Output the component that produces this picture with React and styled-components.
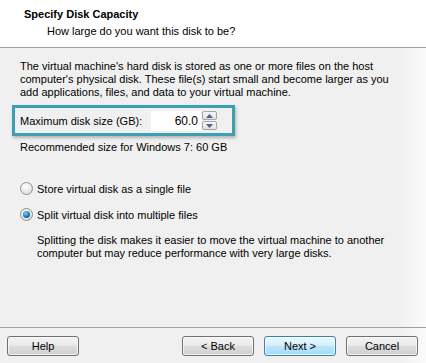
import React, { useState } from "react";
import styled, { createGlobalStyle } from "styled-components";

const GlobalStyle = createGlobalStyle`
  body {
    margin: 0;
    font-family: "Liberation Sans", Arial, sans-serif;
    font-size: 11px;
    color: #000;
  }
`;

export default function App() {
  const [split, setSplit] = useState(true);
  const [size, setSize] = useState("60.0");

  return (
    <>
      <GlobalStyle />
      <Dialog>
        <Header>
          <Title>Specify Disk Capacity</Title>
          <Subtitle>How large do you want this disk to be?</Subtitle>
        </Header>

        <Content>
          <Paragraph>
            The virtual machine's hard disk is stored as one or more files on the host
            computer's physical disk. These file(s) start small and become larger as you
            add applications, files, and data to your virtual machine.
          </Paragraph>

          <Highlight>
            <span>Maximum disk size (GB):</span>
            <Spin>
              <SpinInput value={size} onChange={(e) => setSize(e.target.value)} />
              <SpinButtons>
                <SpinBtn>
                  <svg width="7" height="4" viewBox="0 0 7 4">
                    <path d="M0 4 L3.5 0 L7 4 Z" fill="#4d6185" />
                  </svg>
                </SpinBtn>
                <SpinBtn>
                  <svg width="7" height="4" viewBox="0 0 7 4">
                    <path d="M0 0 L3.5 4 L7 0 Z" fill="#4d6185" />
                  </svg>
                </SpinBtn>
              </SpinButtons>
            </Spin>
          </Highlight>

          <Note>Recommended size for Windows 7: 60 GB</Note>

          <Options>
            <Option onClick={() => setSplit(false)}>
              <Radio checked={!split} />
              Store virtual disk as a single file
            </Option>
            <Option onClick={() => setSplit(true)}>
              <Radio checked={split} />
              Split virtual disk into multiple files
            </Option>
            <OptionNote>
              Splitting the disk makes it easier to move the virtual machine to another
              computer but may reduce performance with very large disks.
            </OptionNote>
          </Options>
        </Content>

        <Footer>
          <Button>Help</Button>
          <Spacer />
          <Button>&lt; Back</Button>
          <Button primary>Next &gt;</Button>
          <Button>Cancel</Button>
        </Footer>
      </Dialog>
    </>
  );
}

const Dialog = styled.div`
  width: 426px;
  height: 363px;
  background: linear-gradient(to right, #f0f0f0 0%, #f0f0f0 93%, #fafafa 100%);
  display: flex;
  flex-direction: column;
  overflow: hidden;
`;

const Header = styled.div`
  height: 48px;
  background: #fff;
  border-bottom: 1px solid #a0a0a0;
  box-sizing: border-box;
  padding: 7px 0 0 24px;
`;

const Title = styled.div`
  font-weight: bold;
  line-height: 14px;
`;

const Subtitle = styled.div`
  padding-left: 23px;
  line-height: 14px;
  margin-top: 3px;
`;

const Content = styled.div`
  flex: 1;
  padding: 12px 20px 0;
`;

const Paragraph = styled.p`
  margin: 0;
  line-height: 13px;
  width: 390px;
`;

const Highlight = styled.div`
  margin: 6px 0 0 -8px;
  width: 223px;
  height: 31px;
  box-sizing: border-box;
  border: 3px solid #3d9fb6;
  box-shadow: 1px 2px 3px rgba(0, 0, 0, 0.25);
  display: flex;
  align-items: center;
  justify-content: space-between;
  padding: 0 15px 0 5px;
`;

const Spin = styled.div`
  display: flex;
  align-items: center;
  height: 20px;
`;

const SpinInput = styled.input`
  width: 50px;
  height: 20px;
  box-sizing: border-box;
  border: none;
  background: #fff;
  text-align: right;
  padding: 0 3px;
  font: inherit;
  font-size: 12px;
  color: #000;
  outline: none;
`;

const SpinButtons = styled.div`
  display: flex;
  flex-direction: column;
  gap: 1px;
  margin-left: 1px;
`;

const SpinBtn = styled.div`
  width: 15px;
  height: 9px;
  box-sizing: border-box;
  border: 1px solid #a6a6a6;
  border-radius: 2px;
  background: linear-gradient(#f6f6f6, #e2e2e2);
  display: flex;
  align-items: center;
  justify-content: center;
`;

const Note = styled.div`
  margin-top: 5px;
  line-height: 13px;
`;

const Options = styled.div`
  margin-top: 28px;
  display: flex;
  flex-direction: column;
`;

const Option = styled.label`
  display: flex;
  align-items: center;
  gap: 4px;
  height: 13px;
  margin-bottom: 13px;
  cursor: default;
`;

const Radio = styled.span`
  width: 13px;
  height: 13px;
  box-sizing: border-box;
  border-radius: 50%;
  border: 1px solid #8e8f8f;
  background: radial-gradient(circle at 40% 35%, #ffffff 0%, #e6e6e6 60%, #cfcfcf 100%);
  display: flex;
  align-items: center;
  justify-content: center;

  &::after {
    content: "";
    display: ${(p) => (p.checked ? "block" : "none")};
    width: 7px;
    height: 7px;
    border-radius: 50%;
    background: radial-gradient(circle at 40% 35%, #7fd0f5 0%, #1b76b4 55%, #0c3f6e 100%);
  }
`;

const OptionNote = styled.p`
  margin: 0 0 0 17px;
  line-height: 13px;
`;

const Footer = styled.div`
  height: 36px;
  border-top: 1px solid #a0a0a0;
  display: flex;
  align-items: flex-start;
  padding: 8px 8px 0 7px;
  gap: 10px;
  box-sizing: border-box;
`;

const Spacer = styled.div`
  flex: 1;
`;

const Button = styled.button`
  width: 72px;
  height: 20px;
  box-sizing: border-box;
  font: inherit;
  font-size: 11px;
  color: #000;
  border-radius: 3px;
  border: 1px solid ${(p) => (p.primary ? "#3c7fb1" : "#707070")};
  background: ${(p) =>
    p.primary
      ? "linear-gradient(#eaf6fd 0%, #d9f0fc 45%, #bee6fd 50%, #a7d9f5 100%)"
      : "linear-gradient(#f2f2f2 0%, #ebebeb 45%, #dddddd 50%, #cfcfcf 100%)"};
  box-shadow: inset 0 0 0 1px rgba(255, 255, 255, 0.7);
  padding: 0;
`;
